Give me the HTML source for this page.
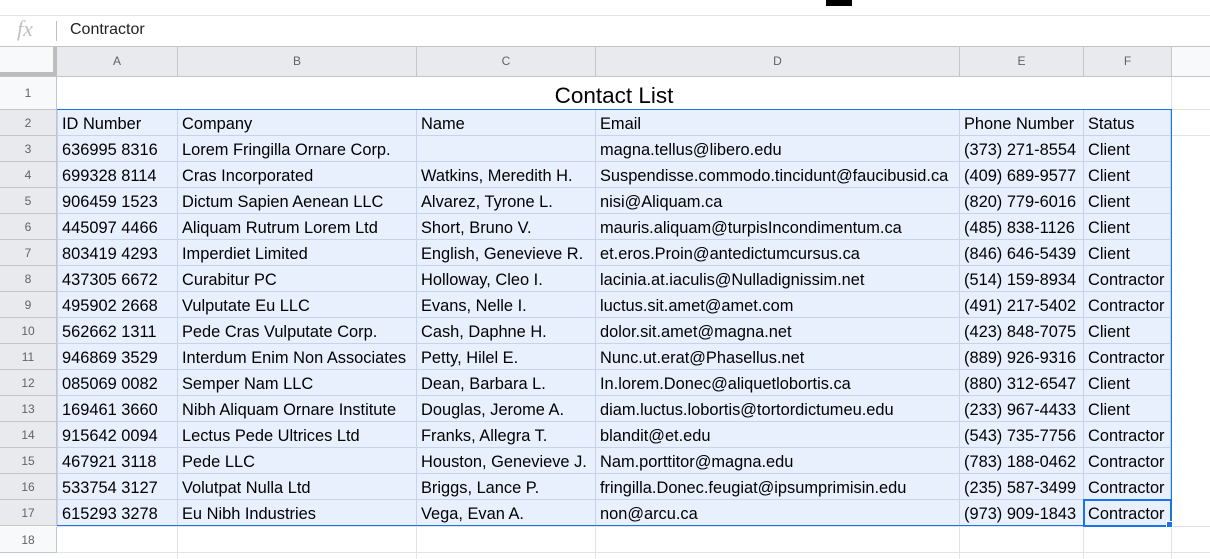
<!DOCTYPE html>
<html><head><meta charset="utf-8"><style>
*{margin:0;padding:0;box-sizing:border-box}
body{width:1210px;height:559px;overflow:hidden;background:#fff;font-family:"Liberation Sans",Arial,sans-serif;position:relative}
.a{position:absolute}
.tb{left:0;top:0;width:1210px;height:16px;border-bottom:1px solid #e2e3e3}
.fx{left:17px;top:16px;font-family:"Liberation Serif",serif;font-style:italic;color:#c0c0c0;font-size:22px}
.fsep{left:56px;top:21px;width:1px;height:20px;background:#c0c0c0}
.fv{left:70px;top:21px;font-size:16px;color:#222}
.ch{top:46px;height:31px;background:#f8f9fa;border-top:1px solid #c4c4c4;border-bottom:1px solid #c4c4c4;left:0;width:1210px}
.c{position:absolute;top:47px;height:29px;background:#e8eaed;border-right:1px solid #c4c7c5;font-size:12px;color:#5f6368;text-align:center;line-height:29px}
.rh{position:absolute;left:0;width:57px;border-bottom:1px solid #c4c7c5;font-size:12px;color:#5f6368;text-align:center;border-right:1px solid #c4c4c4}
.row{position:absolute;left:58px;height:26px;width:1113px;background:#e8f0fe;border-bottom:1px solid #c6d3ea}
.cell{position:absolute;top:0;height:25px;line-height:29px;font-size:16.4px;color:#000;padding-left:4px;white-space:nowrap;overflow:hidden;border-right:1px solid #c6d3ea}
.vl{position:absolute;width:1px;background:#e2e3e3}
</style></head><body>
<div class="a tb"></div>
<div class="a" style="left:826px;top:0;width:26px;height:6px;background:#000"></div>
<div class="a fx">fx</div><div class="a fsep"></div><div class="a fv">Contractor</div>
<div class="a ch"></div>
<div class="c" style="left:0;width:57px;background:#f8f9fa;border-right:4px solid #bdbdbd;border-bottom:4px solid #bdbdbd;height:29px"></div>
<div class="c" style="left:57px;width:121px">A</div>
<div class="c" style="left:178px;width:239px">B</div>
<div class="c" style="left:417px;width:179px">C</div>
<div class="c" style="left:596px;width:364px">D</div>
<div class="c" style="left:960px;width:124px">E</div>
<div class="c" style="left:1084px;width:88px">F</div>
<div class="vl" style="left:1171px;top:77px;height:482px"></div>
<div class="a" style="left:57px;top:526px;width:1153px;height:1px;background:#e2e3e3"></div>
<div class="a" style="left:57px;top:552px;width:1153px;height:1px;background:#e2e3e3"></div>
<div class="a" style="left:1171px;top:135px;width:39px;height:1px;background:#e2e3e3"></div>
<div class="vl" style="left:177px;top:527px;height:32px"></div>
<div class="vl" style="left:416px;top:527px;height:32px"></div>
<div class="vl" style="left:595px;top:527px;height:32px"></div>
<div class="vl" style="left:959px;top:527px;height:32px"></div>
<div class="vl" style="left:1083px;top:527px;height:32px"></div>
<div class="a" style="left:1171px;top:109px;width:39px;height:1px;background:#e2e3e3"></div>
<div class="rh" style="top:77px;height:33px;line-height:33px;background:#f8f9fa">1</div>
<div class="a" style="left:57px;top:83px;width:1114px;text-align:center;font-size:22.5px">Contact List</div>
<div class="a" style="left:57px;top:109px;width:1115px;height:1px;background:#1a73e8"></div>
<div class="a" style="left:57px;top:110px;width:1px;height:416px;background:#c6d3ea"></div>
<div id="rows">
<div class="rh" style="top:110px;height:26px;line-height:26px;background:#e8eaed">2</div>
<div class="row" style="top:110px"><div class="cell" style="left:0;width:120px">ID Number</div><div class="cell" style="left:120px;width:239px">Company</div><div class="cell" style="left:359px;width:179px">Name</div><div class="cell" style="left:538px;width:364px">Email</div><div class="cell" style="left:902px;width:124px">Phone Number</div><div class="cell" style="left:1026px;width:87px">Status</div></div>
<div class="rh" style="top:136px;height:26px;line-height:26px;background:#e8eaed">3</div>
<div class="row" style="top:136px"><div class="cell" style="left:0;width:120px">636995 8316</div><div class="cell" style="left:120px;width:239px">Lorem Fringilla Ornare Corp.</div><div class="cell" style="left:359px;width:179px"></div><div class="cell" style="left:538px;width:364px">magna.tellus@libero.edu</div><div class="cell" style="left:902px;width:124px">(373) 271-8554</div><div class="cell" style="left:1026px;width:87px">Client</div></div>
<div class="rh" style="top:162px;height:26px;line-height:26px;background:#e8eaed">4</div>
<div class="row" style="top:162px"><div class="cell" style="left:0;width:120px">699328 8114</div><div class="cell" style="left:120px;width:239px">Cras Incorporated</div><div class="cell" style="left:359px;width:179px">Watkins, Meredith H.</div><div class="cell" style="left:538px;width:364px">Suspendisse.commodo.tincidunt@faucibusid.ca</div><div class="cell" style="left:902px;width:124px">(409) 689-9577</div><div class="cell" style="left:1026px;width:87px">Client</div></div>
<div class="rh" style="top:188px;height:26px;line-height:26px;background:#e8eaed">5</div>
<div class="row" style="top:188px"><div class="cell" style="left:0;width:120px">906459 1523</div><div class="cell" style="left:120px;width:239px">Dictum Sapien Aenean LLC</div><div class="cell" style="left:359px;width:179px">Alvarez, Tyrone L.</div><div class="cell" style="left:538px;width:364px">nisi@Aliquam.ca</div><div class="cell" style="left:902px;width:124px">(820) 779-6016</div><div class="cell" style="left:1026px;width:87px">Client</div></div>
<div class="rh" style="top:214px;height:26px;line-height:26px;background:#e8eaed">6</div>
<div class="row" style="top:214px"><div class="cell" style="left:0;width:120px">445097 4466</div><div class="cell" style="left:120px;width:239px">Aliquam Rutrum Lorem Ltd</div><div class="cell" style="left:359px;width:179px">Short, Bruno V.</div><div class="cell" style="left:538px;width:364px">mauris.aliquam@turpisIncondimentum.ca</div><div class="cell" style="left:902px;width:124px">(485) 838-1126</div><div class="cell" style="left:1026px;width:87px">Client</div></div>
<div class="rh" style="top:240px;height:26px;line-height:26px;background:#e8eaed">7</div>
<div class="row" style="top:240px"><div class="cell" style="left:0;width:120px">803419 4293</div><div class="cell" style="left:120px;width:239px">Imperdiet Limited</div><div class="cell" style="left:359px;width:179px">English, Genevieve R.</div><div class="cell" style="left:538px;width:364px">et.eros.Proin@antedictumcursus.ca</div><div class="cell" style="left:902px;width:124px">(846) 646-5439</div><div class="cell" style="left:1026px;width:87px">Client</div></div>
<div class="rh" style="top:266px;height:26px;line-height:26px;background:#e8eaed">8</div>
<div class="row" style="top:266px"><div class="cell" style="left:0;width:120px">437305 6672</div><div class="cell" style="left:120px;width:239px">Curabitur PC</div><div class="cell" style="left:359px;width:179px">Holloway, Cleo I.</div><div class="cell" style="left:538px;width:364px">lacinia.at.iaculis@Nulladignissim.net</div><div class="cell" style="left:902px;width:124px">(514) 159-8934</div><div class="cell" style="left:1026px;width:87px">Contractor</div></div>
<div class="rh" style="top:292px;height:26px;line-height:26px;background:#e8eaed">9</div>
<div class="row" style="top:292px"><div class="cell" style="left:0;width:120px">495902 2668</div><div class="cell" style="left:120px;width:239px">Vulputate Eu LLC</div><div class="cell" style="left:359px;width:179px">Evans, Nelle I.</div><div class="cell" style="left:538px;width:364px">luctus.sit.amet@amet.com</div><div class="cell" style="left:902px;width:124px">(491) 217-5402</div><div class="cell" style="left:1026px;width:87px">Contractor</div></div>
<div class="rh" style="top:318px;height:26px;line-height:26px;background:#e8eaed">10</div>
<div class="row" style="top:318px"><div class="cell" style="left:0;width:120px">562662 1311</div><div class="cell" style="left:120px;width:239px">Pede Cras Vulputate Corp.</div><div class="cell" style="left:359px;width:179px">Cash, Daphne H.</div><div class="cell" style="left:538px;width:364px">dolor.sit.amet@magna.net</div><div class="cell" style="left:902px;width:124px">(423) 848-7075</div><div class="cell" style="left:1026px;width:87px">Client</div></div>
<div class="rh" style="top:344px;height:26px;line-height:26px;background:#e8eaed">11</div>
<div class="row" style="top:344px"><div class="cell" style="left:0;width:120px">946869 3529</div><div class="cell" style="left:120px;width:239px">Interdum Enim Non Associates</div><div class="cell" style="left:359px;width:179px">Petty, Hilel E.</div><div class="cell" style="left:538px;width:364px">Nunc.ut.erat@Phasellus.net</div><div class="cell" style="left:902px;width:124px">(889) 926-9316</div><div class="cell" style="left:1026px;width:87px">Contractor</div></div>
<div class="rh" style="top:370px;height:26px;line-height:26px;background:#e8eaed">12</div>
<div class="row" style="top:370px"><div class="cell" style="left:0;width:120px">085069 0082</div><div class="cell" style="left:120px;width:239px">Semper Nam LLC</div><div class="cell" style="left:359px;width:179px">Dean, Barbara L.</div><div class="cell" style="left:538px;width:364px">In.lorem.Donec@aliquetlobortis.ca</div><div class="cell" style="left:902px;width:124px">(880) 312-6547</div><div class="cell" style="left:1026px;width:87px">Client</div></div>
<div class="rh" style="top:396px;height:26px;line-height:26px;background:#e8eaed">13</div>
<div class="row" style="top:396px"><div class="cell" style="left:0;width:120px">169461 3660</div><div class="cell" style="left:120px;width:239px">Nibh Aliquam Ornare Institute</div><div class="cell" style="left:359px;width:179px">Douglas, Jerome A.</div><div class="cell" style="left:538px;width:364px">diam.luctus.lobortis@tortordictumeu.edu</div><div class="cell" style="left:902px;width:124px">(233) 967-4433</div><div class="cell" style="left:1026px;width:87px">Client</div></div>
<div class="rh" style="top:422px;height:26px;line-height:26px;background:#e8eaed">14</div>
<div class="row" style="top:422px"><div class="cell" style="left:0;width:120px">915642 0094</div><div class="cell" style="left:120px;width:239px">Lectus Pede Ultrices Ltd</div><div class="cell" style="left:359px;width:179px">Franks, Allegra T.</div><div class="cell" style="left:538px;width:364px">blandit@et.edu</div><div class="cell" style="left:902px;width:124px">(543) 735-7756</div><div class="cell" style="left:1026px;width:87px">Contractor</div></div>
<div class="rh" style="top:448px;height:26px;line-height:26px;background:#e8eaed">15</div>
<div class="row" style="top:448px"><div class="cell" style="left:0;width:120px">467921 3118</div><div class="cell" style="left:120px;width:239px">Pede LLC</div><div class="cell" style="left:359px;width:179px">Houston, Genevieve J.</div><div class="cell" style="left:538px;width:364px">Nam.porttitor@magna.edu</div><div class="cell" style="left:902px;width:124px">(783) 188-0462</div><div class="cell" style="left:1026px;width:87px">Contractor</div></div>
<div class="rh" style="top:474px;height:26px;line-height:26px;background:#e8eaed">16</div>
<div class="row" style="top:474px"><div class="cell" style="left:0;width:120px">533754 3127</div><div class="cell" style="left:120px;width:239px">Volutpat Nulla Ltd</div><div class="cell" style="left:359px;width:179px">Briggs, Lance P.</div><div class="cell" style="left:538px;width:364px">fringilla.Donec.feugiat@ipsumprimisin.edu</div><div class="cell" style="left:902px;width:124px">(235) 587-3499</div><div class="cell" style="left:1026px;width:87px">Contractor</div></div>
<div class="rh" style="top:500px;height:26px;line-height:26px;background:#e8eaed">17</div>
<div class="row" style="top:500px"><div class="cell" style="left:0;width:120px">615293 3278</div><div class="cell" style="left:120px;width:239px">Eu Nibh Industries</div><div class="cell" style="left:359px;width:179px">Vega, Evan A.</div><div class="cell" style="left:538px;width:364px">non@arcu.ca</div><div class="cell" style="left:902px;width:124px">(973) 909-1843</div><div class="cell" style="left:1026px;width:87px">Contractor</div></div>
</div>
<div class="rh" style="top:527px;height:26px;line-height:26px;background:#f8f9fa">18</div>
<div class="a" style="left:57px;top:525px;width:1115px;height:1px;background:#1a73e8"></div>
<div class="a" style="left:1171px;top:109px;width:1px;height:417px;background:#1a73e8"></div>
<div class="a" style="left:1083px;top:499px;width:89px;height:28px;border:2px solid #1a73e8"></div>
<div class="a" style="left:1166px;top:521px;width:7px;height:7px;background:#1a73e8;border:1px solid #fff"></div>
</body></html>
